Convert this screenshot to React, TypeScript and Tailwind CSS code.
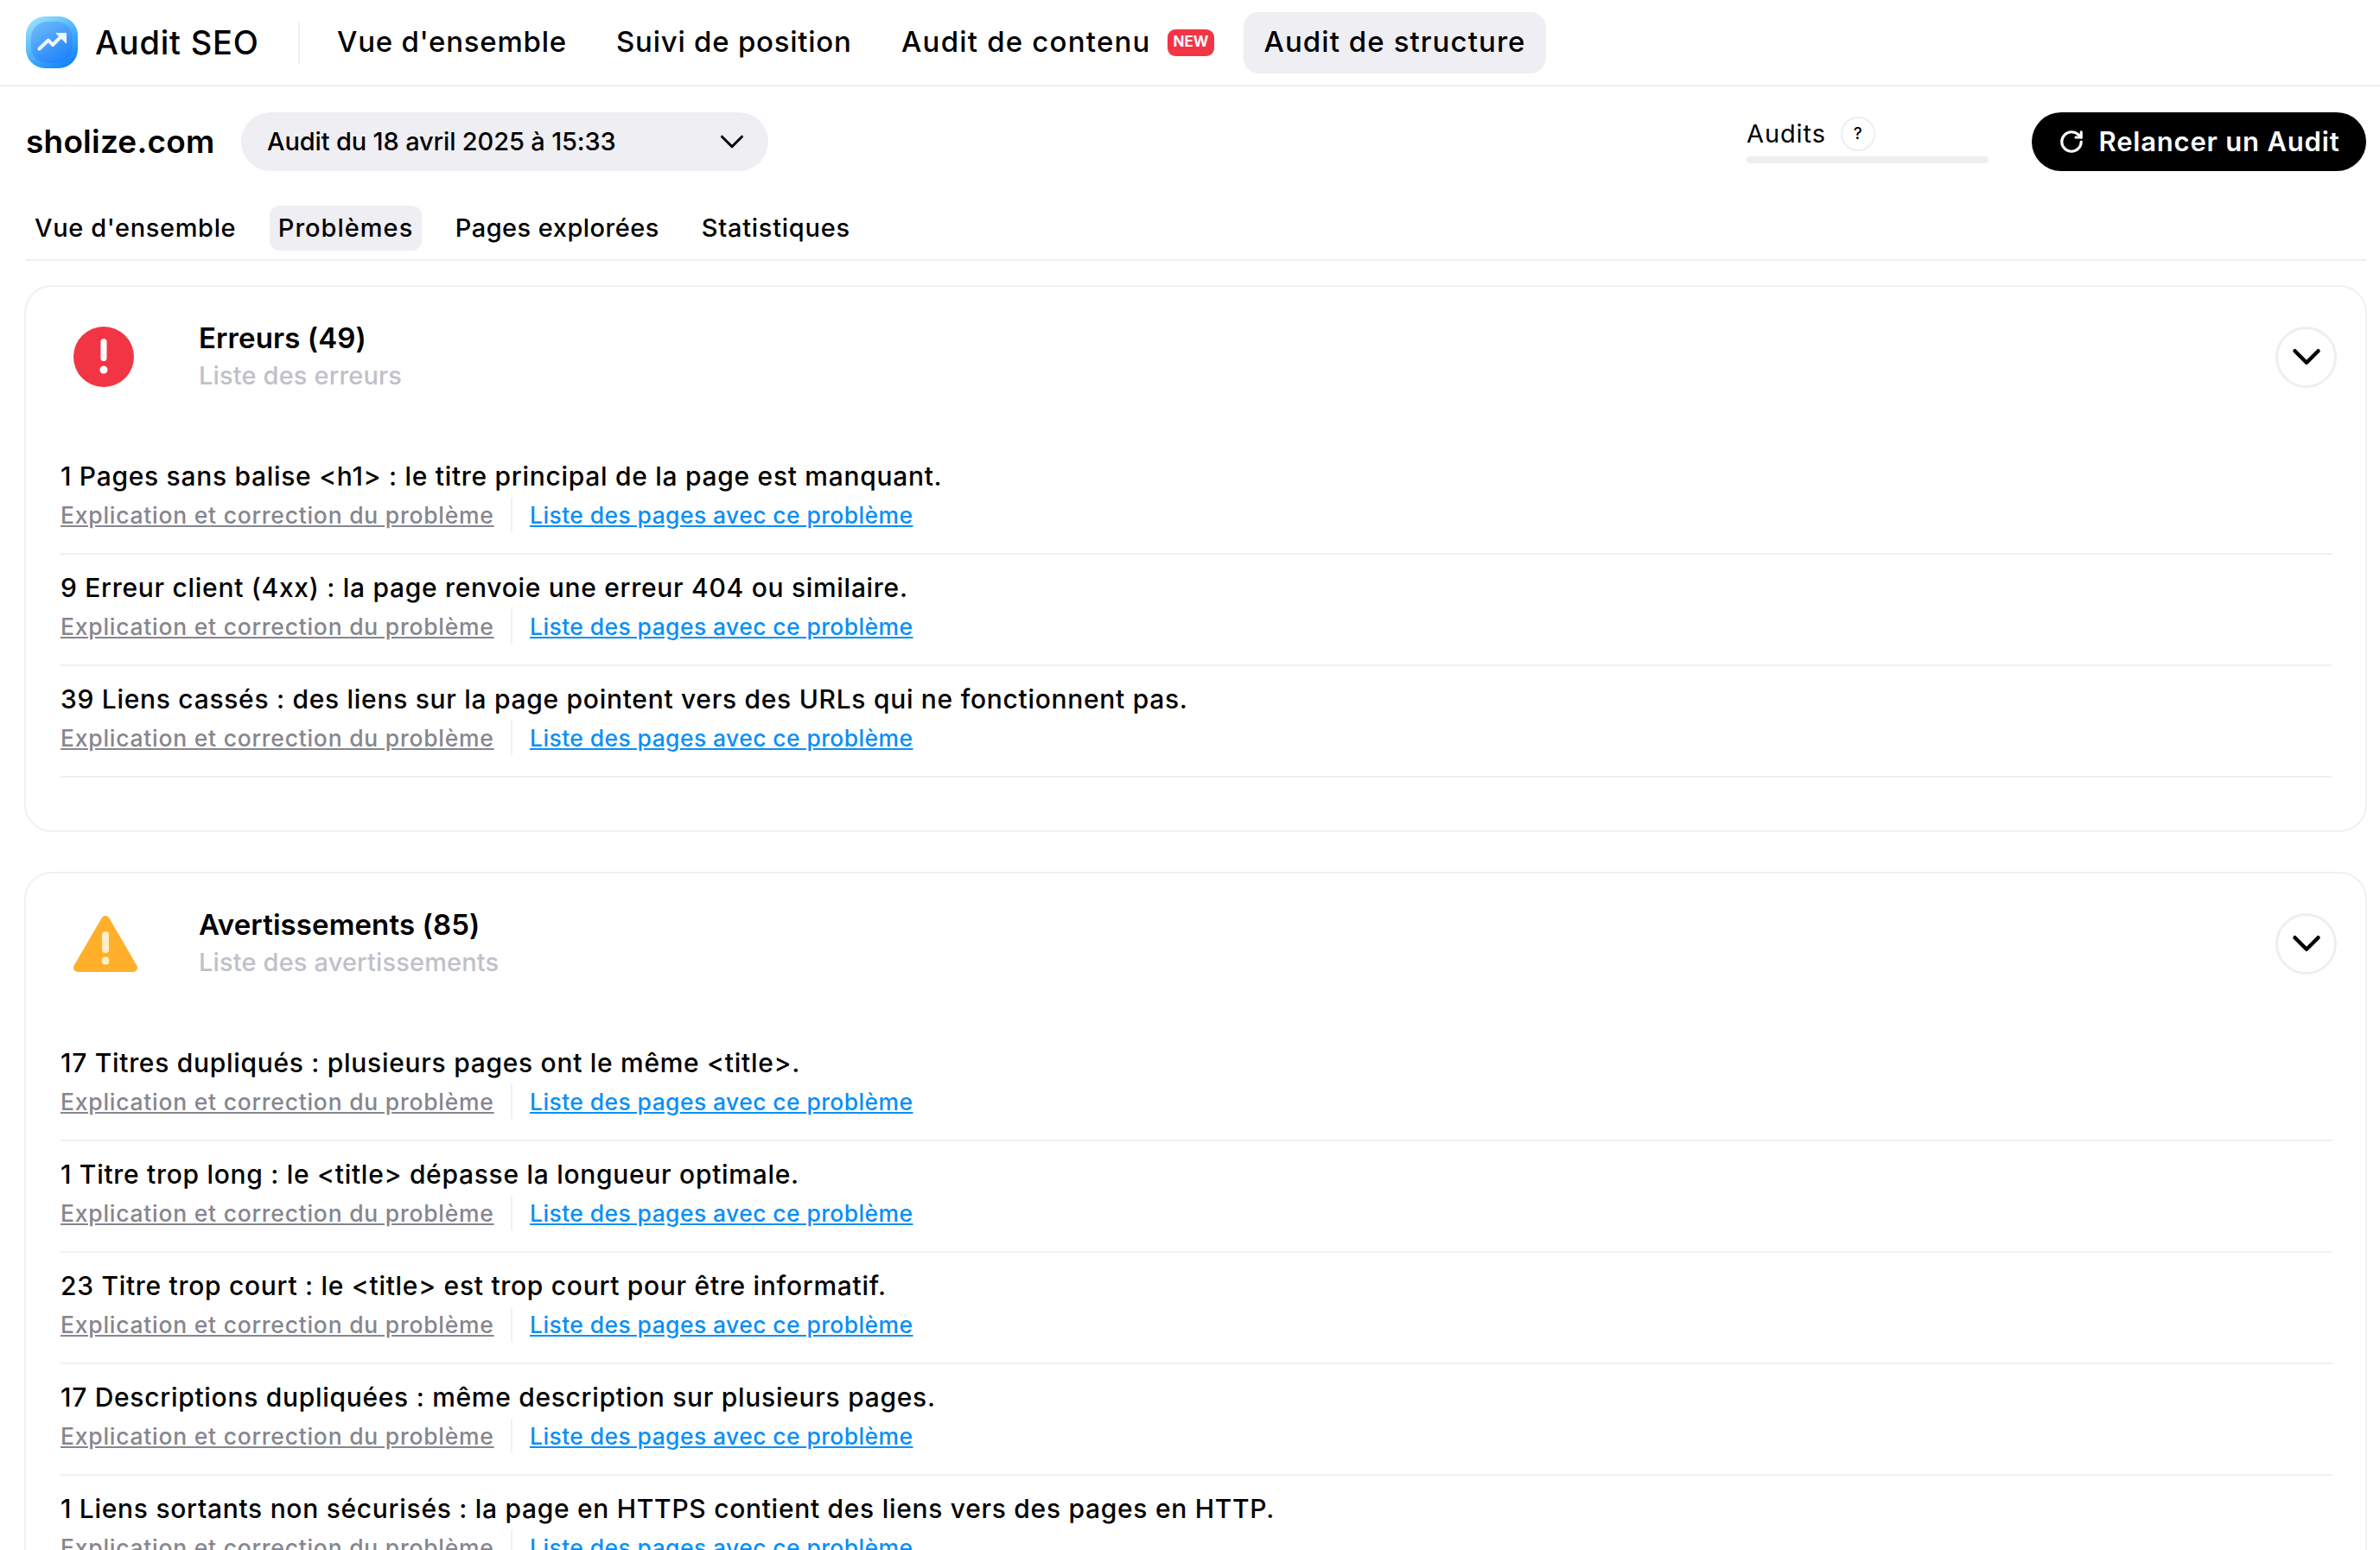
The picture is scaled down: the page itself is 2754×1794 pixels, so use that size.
import React from "react";
import { ChevronDown, RotateCw } from "lucide-react";

const Logo = () => (
  <svg viewBox="0 0 60 60" className="w-[60px] h-[60px] shrink-0">
    <defs>
      <linearGradient id="lo" x1="0.15" y1="0" x2="0.8" y2="1">
        <stop offset="0" stopColor="#9fe3fb" />
        <stop offset="0.5" stopColor="#4db4fb" />
        <stop offset="1" stopColor="#0f80fb" />
      </linearGradient>
      <linearGradient id="li" x1="0.2" y1="0" x2="0.8" y2="1">
        <stop offset="0" stopColor="#6cb9fb" />
        <stop offset="1" stopColor="#1c80fb" />
      </linearGradient>
    </defs>
    <rect x="0" y="0" width="60" height="60" rx="22" fill="url(#lo)" />
    <rect x="6" y="6" width="48" height="48" rx="19" fill="url(#li)" />
    <path d="M15.5 37.5 L26 27.5 L31 33 L42 22" fill="none" stroke="#f1f7fe" strokeWidth="4" strokeLinecap="round" strokeLinejoin="round" />
    <path d="M35 19.5 H46.5 V31 Z" fill="#f1f7fe" stroke="#f1f7fe" strokeWidth="1" strokeLinejoin="round" />
  </svg>
);

const ErrorIcon = () => (
  <svg viewBox="0 0 70 70" className="w-[70px] h-[70px]">
    <circle cx="35" cy="35" r="35" fill="#f23545" />
    <rect x="31.5" y="14" width="7" height="26" rx="3.5" fill="#fff" />
    <circle cx="35" cy="50" r="4.5" fill="#fff" />
  </svg>
);

const WarnIcon = () => (
  <svg viewBox="0 0 74 66" className="w-[74px] h-[66px]">
    <path d="M37 6 L69 61 H5 Z" fill="#ffaf29" stroke="#ffaf29" strokeWidth="10" strokeLinejoin="round" />
    <rect x="33" y="19" width="8" height="25" rx="4" fill="#ffeec8" />
    <circle cx="37" cy="53" r="4.5" fill="#ffeec8" />
  </svg>
);

const Item = ({ text }: { text: string }) => (
  <div className="pt-[18px] pb-[24.5px] border-b-2 border-[#f0f0f4]">
    <div className="text-[30px] leading-[40px] font-medium text-black tracking-[0.7px]">{text}</div>
    <div className="mt-[4.5px] flex items-center h-[40px]">
      <a className="w-[501px] text-[26.5px] leading-[40px] font-medium text-[#86868e] underline tracking-[0.75px] whitespace-nowrap">Explication et correction du problème</a>
      <span className="ml-[20px] mr-[20px] w-[2px] h-[40px] bg-[#f0f0f4]" />
      <a className="text-[26.5px] leading-[40px] font-medium text-[#0a8ff5] underline tracking-[0.4px] whitespace-nowrap">Liste des pages avec ce problème</a>
    </div>
  </div>
);

const Card = ({ icon, title, sub, items, className }: { icon: React.ReactNode; title: string; sub: string; items: string[]; className: string }) => (
  <section className={"border-2 border-[#f0f0f4] rounded-[32px] pt-[45px] pb-[61px] pl-[40px] pr-[38px] " + className}>
    <div className="flex items-center justify-between h-[72px]">
      <div className="flex items-center">
        <div className="w-[160px] pl-[15px] flex">{icon}</div>
        <div>
          <div className="text-[33px] leading-[40px] font-semibold text-black tracking-[0.1px]">{title}</div>
          <div className="mt-1 text-[29px] leading-[40px] font-medium text-[#c0c1c8] tracking-[0.15px]">{sub}</div>
        </div>
      </div>
      <button className="-mr-[5px] w-[71px] h-[71px] rounded-full border-[3.5px] border-[#eeeef3] flex items-center justify-center text-black">
        <ChevronDown size={54} strokeWidth={2} />
      </button>
    </div>
    <div className="mt-[64px]">
      {items.map((t) => (
        <Item key={t} text={t} />
      ))}
    </div>
  </section>
);

export default function App() {
  return (
    <div className="w-[2754px] h-[1794px] overflow-hidden bg-white font-['Inter',sans-serif] text-black">
      <header className="flex items-center h-[100px] border-b-2 border-[#eeeef3] pl-[30px]">
        <Logo />
        <div className="ml-5 w-[235px] text-[38px] font-medium tracking-[0.8px]">Audit SEO</div>
        <span className="w-[2px] h-[49px] bg-[#f0f0f4]" />
        <div className="ml-[43px] w-[323px] text-[33px] font-medium tracking-[0.75px]">Vue d'ensemble</div>
        <div className="w-[330px] text-[33px] font-medium tracking-[0.75px]">Suivi de position</div>
        <div className="w-[308px] text-[33px] font-medium tracking-[1.2px]">Audit de contenu</div>
        <span className="w-[54px] h-[31px] rounded-[9px] bg-[#f23545] text-white text-[17px] font-bold flex items-center justify-center">NEW</span>
        <div className="ml-[34px] w-[350px] h-[71px] rounded-[18px] bg-[#eeeef3] flex items-center justify-center text-[33px] font-medium tracking-[1.07px]">Audit de structure</div>
      </header>

      <div className="flex items-center mt-[30px] pl-[30px] pr-[16px] h-[68px]">
        <div className="w-[249px] text-[37px] font-semibold tracking-[0.2px]">sholize.com</div>
        <div className="w-[610px] h-[68px] rounded-[34px] bg-[#eeeef3] flex items-center justify-between pl-[30px] pr-[19px]">
          <span className="text-[29px] font-medium tracking-[-0.15px]">Audit du 18 avril 2025 à 15:33</span>
          <ChevronDown size={46} strokeWidth={1.6} />
        </div>
        <div className="ml-auto w-[280px] relative">
          <div className="flex items-center h-[40px] -mt-[4px]">
            <span className="text-[29px] font-normal tracking-[0.9px]">Audits</span>
            <span className="ml-[17px] w-[40px] h-[40px] rounded-full border-2 border-[#eeeef3] flex items-center justify-center text-[19px] font-medium">?</span>
          </div>
          <div className="mt-[6px] h-2 rounded bg-[#eeeef3]" />
        </div>
        <button className="ml-[50px] w-[387px] h-[68px] rounded-[34px] bg-black text-white flex items-center justify-center gap-[17px] text-[31px] font-semibold tracking-[0.8px]">
          <RotateCw size={30} strokeWidth={2.5} />
          Relancer un Audit
        </button>
      </div>

      <nav className="flex mt-[40px] ml-[30px] mr-[16px] pb-[10px] border-b-2 border-[#eeeef3] gap-[29px]">
        <div className="px-[10px] h-[52px] flex items-center text-[29px] font-medium rounded-[10px] tracking-[0.63px]">Vue d'ensemble</div>
        <div className="px-[9.5px] h-[52px] flex items-center text-[29px] font-medium rounded-[12px] bg-[#eeeef3] tracking-[1px]">Problèmes</div>
        <div className="px-[10px] h-[52px] flex items-center text-[29px] font-medium rounded-[10px] tracking-[0.47px]">Pages explorées</div>
        <div className="px-[10px] h-[52px] flex items-center text-[29px] font-medium rounded-[10px] tracking-[0.73px]">Statistiques</div>
      </nav>

      <main className="mt-[28px] ml-[28px] mr-[15px]">
        <Card
          className="mb-[46px]"
          icon={<ErrorIcon />}
          title="Erreurs (49)"
          sub="Liste des erreurs"
          items={[
            "1 Pages sans balise <h1> : le titre principal de la page est manquant.",
            "9 Erreur client (4xx) : la page renvoie une erreur 404 ou similaire.",
            "39 Liens cassés : des liens sur la page pointent vers des URLs qui ne fonctionnent pas.",
          ]}
        />
        <Card
          className=""
          icon={<WarnIcon />}
          title="Avertissements (85)"
          sub="Liste des avertissements"
          items={[
            "17 Titres dupliqués : plusieurs pages ont le même <title>.",
            "1 Titre trop long : le <title> dépasse la longueur optimale.",
            "23 Titre trop court : le <title> est trop court pour être informatif.",
            "17 Descriptions dupliquées : même description sur plusieurs pages.",
            "1 Liens sortants non sécurisés : la page en HTTPS contient des liens vers des pages en HTTP.",
          ]}
        />
      </main>
    </div>
  );
}
